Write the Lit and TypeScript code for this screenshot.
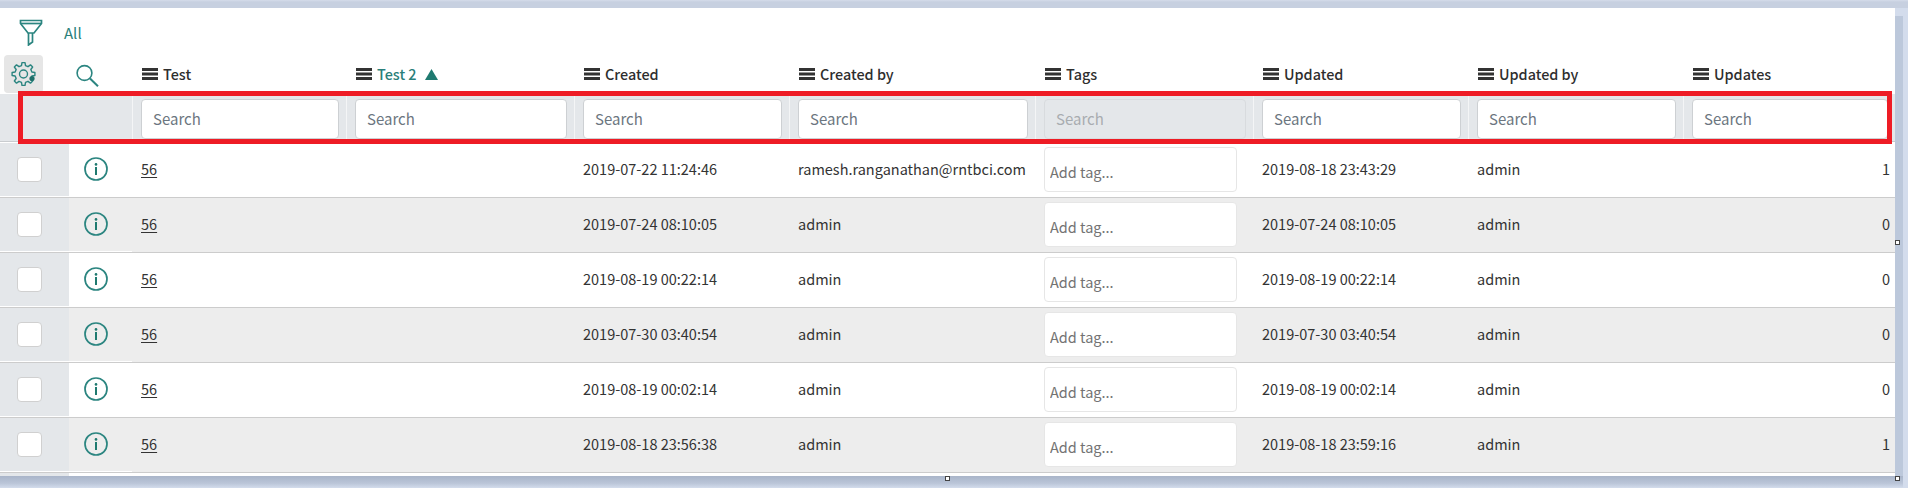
import { LitElement, html, css, svg } from "lit";
import { customElement } from "lit/decorators.js";

const COLS = [
  { label: "Test" },
  { label: "Test 2", sorted: true },
  { label: "Created" },
  { label: "Created by" },
  { label: "Tags", disabled: true },
  { label: "Updated" },
  { label: "Updated by" },
  { label: "Updates" },
];

const ROWS = [
  ["2019-07-22 11:24:46", "ramesh.ranganathan@rntbci.com", "2019-08-18 23:43:29", "1"],
  ["2019-07-24 08:10:05", "admin", "2019-07-24 08:10:05", "0"],
  ["2019-08-19 00:22:14", "admin", "2019-08-19 00:22:14", "0"],
  ["2019-07-30 03:40:54", "admin", "2019-07-30 03:40:54", "0"],
  ["2019-08-19 00:02:14", "admin", "2019-08-19 00:02:14", "0"],
  ["2019-08-18 23:56:38", "admin", "2019-08-18 23:59:16", "1"],
];

function gearPath(cx: number, cy: number, outer: number, inner: number, teeth: number) {
  let d = "";
  const step = (Math.PI * 2) / teeth;
  for (let i = 0; i < teeth; i++) {
    const a = i * step - Math.PI / 2;
    const pts: [number, number][] = [
      [inner, a - step * 0.3],
      [outer, a - step * 0.17],
      [outer, a + step * 0.17],
      [inner, a + step * 0.3],
    ];
    for (const [r, t] of pts) {
      d += `${d ? "L" : "M"}${(cx + r * Math.cos(t)).toFixed(2)} ${(cy + r * Math.sin(t)).toFixed(2)}`;
    }
  }
  return d + "Z";
}

const menuIcon = html`<svg class="menu" width="16" height="12" viewBox="0 0 16 12">
  <rect width="16" height="3" fill="#333"></rect>
  <rect y="4.5" width="16" height="3" fill="#333"></rect>
  <rect y="9" width="16" height="3" fill="#333"></rect>
</svg>`;

const infoIcon = html`<svg class="info" width="24" height="24" viewBox="0 0 24 24" fill="none">
  <circle cx="12" cy="12" r="11" stroke="#2b8580" stroke-width="1.7"></circle>
  <circle cx="12" cy="7.4" r="1.3" fill="#1f7a70"></circle>
  <rect x="11" y="10" width="2" height="8" fill="#1f7a70"></rect>
</svg>`;

@customElement("app-root")
export class AppRoot extends LitElement {
  static styles = css`
    :host {
      display: block;
      width: 1908px;
      height: 488px;
      position: relative;
      overflow: hidden;
      background: #d3dcec;
      font-family: "Noto Sans CJK SC", "Source Sans Pro", "Noto Sans", sans-serif;
      font-size: 14.5px;
      line-height: 20px;
      color: #333;
    }
    .top-band { height: 8px; background: linear-gradient(#d5dcea 0, #c7d0e0 2px, #c7d0e0 100%); }
    .middle { display: flex; height: 468px; }
    .panel { width: 1895px; height: 468px; background: #fff; overflow: hidden; flex: none; }
    .side { width: 8px; margin-top: 8px; background: #bcc8db; flex: none; }
    .bottom {
      height: 12px;
      width: 1903px;
      background: linear-gradient(#a9b5c9 0, #bac5d8 60%, #d3dcec 100%);
    }
    .toolbar { height: 47px; display: flex; align-items: flex-start; padding: 11px 0 0 19px; box-sizing: border-box; }
    .toolbar .all { margin-left: 21px; margin-top: 4px; color: #2b7f7a; font-size: 15px; }
    .grid {
      display: grid;
      grid-template-columns: 69px 63px 214px 228px 215px 246px 218px 215px 215px 212px;
    }
    .head { height: 39px; }
    .gear-box {
      margin-left: 4px;
      width: 39px;
      height: 38px;
      background: #e6e6e6;
      border-radius: 4px;
      display: flex;
      align-items: center;
      justify-content: center;
    }
    .search-cell { padding: 9px 0 0 7px; }
    .th {
      display: flex;
      align-items: center;
      padding: 1px 0 0 10px;
      height: 36px;
      box-sizing: content-box;
      font-weight: 500;
      font-size: 14.4px;
      color: #2e2e2e;
      white-space: nowrap;
    }
    .menu { margin-right: 5px; flex: none; }
    .th.sorted { color: #2b7f7a; }
    .tri { margin-left: 8px; }
    .filter { background: #e4e7ea; border-bottom: 1px solid #c9cccf; height: 47px; margin-bottom: 1px; }
    .f-spacer { grid-column: span 2; }
    .f-cell { border-left: 1px solid #f4f5f6; padding: 5px 7px 0 8px; }
    .f-cell input {
      display: block;
      width: 100%;
      height: 40px;
      box-sizing: border-box;
      background: #fff;
      border: 1px solid #cdd0d3;
      border-radius: 4px;
      padding: 0 11px 1px;
      font: inherit;
      font-size: 15px;
      outline: none;
    }
    .f-cell input::placeholder { color: #6c7680; opacity: 1; }
    .f-cell input:disabled { background: #e4e7ea; border-color: #d8dbde; }
    .f-cell input:disabled::placeholder { color: #a8acb0; }
    .row { height: 55px; box-sizing: border-box; border-bottom: 1px solid #cccccc; background: #fff; }
    .row.alt { background: #ededed; }
    .c {
      display: flex;
      align-items: center;
      padding: 0 0 2px 9px;
      height: 54px;
      box-sizing: border-box;
      white-space: nowrap;
      color: #333;
    }
    .c-check {
      background: #e4e7ea;
      border-bottom: 1px solid #fff;
      padding: 0 0 0 17px;
    }
    .check {
      width: 25px;
      height: 25px;
      box-sizing: border-box;
      background: #fff;
      border: 1px solid #d0d0d0;
      border-radius: 4px;
    }
    .c-info {
      border-bottom: 1px solid #fff;
      padding: 0 0 2px 15px;
    }
    .link { color: #333; text-decoration: underline; text-underline-offset: 2px; }
    .tag-cell { padding: 0 0 0 9px; display: block; }
    .tag {
      display: block;
      margin-top: 4px;
      width: 193px;
      height: 45px;
      box-sizing: border-box;
      background: #fff;
      border: 1px solid #e6e6e6;
      border-radius: 4px;
      padding: 3px 5px 0;
      font: inherit;
      outline: none;
    }
    .tag::placeholder { color: #737373; opacity: 1; }
    .num { justify-content: flex-end; padding: 0 5px 2px 0; }
    .tail { display: flex; height: 3px; }
    .tail i { width: 69px; background: #e4e7ea; }
    .highlight {
      position: absolute;
      left: 18px;
      top: 91px;
      width: 1874px;
      height: 53px;
      box-sizing: border-box;
      border: 5px solid #ee1c25;
      pointer-events: none;
    }
    .handle {
      position: absolute;
      width: 5px;
      height: 5px;
      box-sizing: border-box;
      background: #fff;
      border: 1px solid #444;
    }
    .h1 { left: 1895px; top: 240px; }
    .h2 { left: 945px; top: 476px; }
    .h3 { left: 1895px; top: 476px; }
  `;

  render() {
    return html`
      <div class="top-band"></div>
      <div class="middle">
        <div class="panel">
          <div class="toolbar">
            <svg width="24" height="27" viewBox="0 0 24 27" fill="none" stroke="#2b8580" stroke-width="1.7">
              <path d="M1.5 1.5H22.5V4.5L15 14H9L1.5 4.5Z"></path>
              <path d="M2 4.5H22"></path>
              <path d="M9.5 14V26L13.5 23V14"></path>
            </svg>
            <span class="all">All</span>
          </div>
          <div class="grid head">
            <div class="gear-box">
              <svg width="26" height="26" viewBox="0 0 26 26" fill="none" stroke="#2b8580" stroke-width="1.4">
                ${svg`<path d=${gearPath(12.5, 13, 11.5, 8.6, 8)} stroke-linejoin="round"></path>`}
                <circle cx="12.5" cy="13" r="4"></circle>
                <circle cx="21" cy="17.5" r="2.6" fill="#1f6f6a" stroke="none"></circle>
              </svg>
            </div>
            <div class="search-cell">
              <svg width="24" height="24" viewBox="0 0 24 24" fill="none" stroke="#2b8580" stroke-width="1.6">
                <circle cx="8.5" cy="9" r="7.4"></circle>
                <path d="M14 14.5L22 22.2" stroke-width="2"></path>
              </svg>
            </div>
            ${COLS.map(
              (c) => html`<div class="th ${c.sorted ? "sorted" : ""}">
                ${menuIcon}<span>${c.label}</span>
                ${c.sorted
                  ? html`<svg class="tri" width="13" height="11" viewBox="0 0 13 11"><path d="M6.5 0L13 11H0Z" fill="#1f7a70"></path></svg>`
                  : ""}
              </div>`
            )}
          </div>
          <div class="grid filter">
            <div class="f-spacer"></div>
            ${COLS.map(
              (c) => html`<div class="f-cell"><input placeholder="Search" ?disabled=${c.disabled} /></div>`
            )}
          </div>
          ${ROWS.map(
            (r, i) => html`<div class="grid row ${i % 2 ? "alt" : ""}">
              <div class="c c-check"><div class="check"></div></div>
              <div class="c c-info">${infoIcon}</div>
              <div class="c"><span class="link">56</span></div>
              <div class="c"></div>
              <div class="c">${r[0]}</div>
              <div class="c">${r[1]}</div>
              <div class="c tag-cell"><input class="tag" placeholder="Add tag..." /></div>
              <div class="c">${r[2]}</div>
              <div class="c">admin</div>
              <div class="c num">${r[3]}</div>
            </div>`
          )}
          <div class="tail"><i></i></div>
        </div>
        <div class="side"></div>
      </div>
      <div class="bottom"></div>
      <div class="highlight"></div>
      <div class="handle h1"></div>
      <div class="handle h2"></div>
      <div class="handle h3"></div>
    `;
  }
}
